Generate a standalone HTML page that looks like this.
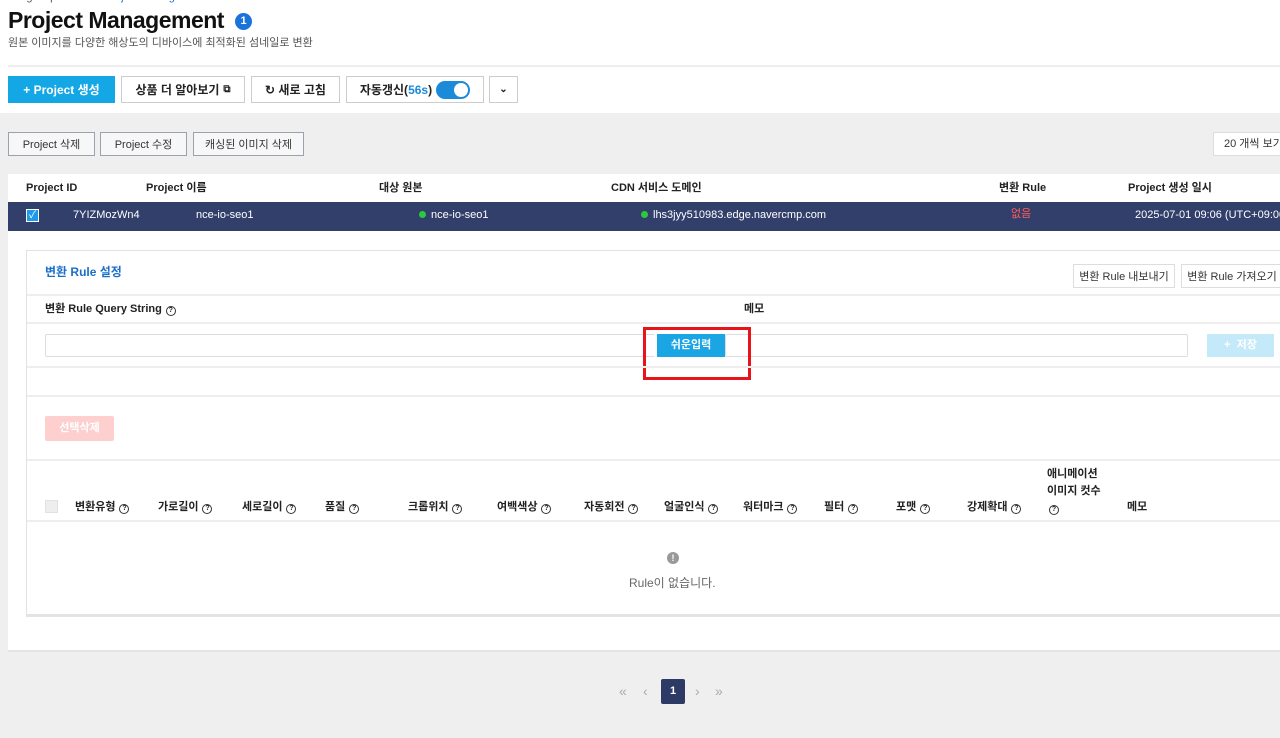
<!DOCTYPE html>
<html><head><meta charset="utf-8"><style>
*{box-sizing:border-box;margin:0;padding:0}
body{width:1280px;height:738px;overflow:hidden;background:#efefef;font-family:"Liberation Sans","Noto Sans CJK KR",sans-serif;color:#222;position:relative;font-size:12px}
.a{position:absolute;line-height:1.2}
.btn{position:absolute;background:#fff;border:1px solid #ccc;height:28px;display:flex;align-items:center;justify-content:center;font-size:12px;font-weight:bold;color:#222}
.sbtn{position:absolute;background:#f7f7f7;border:1px solid #9aa3ad;height:24px;display:flex;align-items:center;justify-content:center;font-size:11px;color:#333}
.th{position:absolute;font-size:11px;font-weight:bold;color:#222;white-space:nowrap;line-height:14px}
.q{display:inline-block;width:10px;height:10px;border:1px solid #333;border-radius:50%;font-size:7px;line-height:8px;text-align:center;margin-left:4px;vertical-align:0px;font-weight:bold}
.hl{position:absolute;height:2px;background:#eee}
</style></head><body>
<div class="a" style="left:0;top:0;width:1280px;height:113px;background:#fff"></div>
<div class="a" style="left:8px;top:-9px;font-size:11px;color:#555">Image Optimizer &nbsp;/&nbsp; <span style="color:#1a73d9">Project Management</span></div>
<div class="a" style="left:8px;top:7px;font-size:23px;font-weight:bold;color:#111;letter-spacing:-0.5px">Project Management</div>
<div class="a" style="left:235px;top:13px;width:17px;height:17px;border-radius:50%;background:#1a73d9;color:#fff;font-size:11px;font-weight:bold;text-align:center;line-height:17px">1</div>
<div class="a" style="left:8px;top:37px;font-size:11px;color:#555">원본 이미지를 다양한 해상도의 디바이스에 최적화된 섬네일로 변환</div>
<div class="a" style="left:8px;top:65px;width:1272px;height:2px;background:#eee"></div>
<div class="btn" style="left:8px;top:76px;width:107px;height:27px;background:#14a7e6;border-color:#14a7e6;color:#fff">+ Project 생성</div>
<div class="btn" style="left:121px;top:76px;width:124px;height:27px">상품 더 알아보기 <span style="font-size:10px;margin-left:4px">⧉</span></div>
<div class="btn" style="left:251px;top:76px;width:89px;height:27px">↻ 새로 고침</div>
<div class="btn" style="left:346px;top:76px;width:138px;height:27px">자동갱신(<span style="color:#1a8ad9">56s</span>)<span style="display:inline-block;width:34px;height:18px;border-radius:9px;background:#1a8ad9;margin-left:4px;position:relative"><span style="position:absolute;right:2px;top:2px;width:14px;height:14px;border-radius:50%;background:#fff"></span></span></div>
<div class="btn" style="left:489px;top:76px;width:29px;height:27px;font-size:10px">⌄</div>

<div class="sbtn" style="left:8px;top:132px;width:87px">Project 삭제</div>
<div class="sbtn" style="left:100px;top:132px;width:87px">Project 수정</div>
<div class="sbtn" style="left:193px;top:132px;width:111px">캐싱된 이미지 삭제</div>
<div class="a" style="left:1213px;top:132px;width:70px;height:24px;background:#fff;border:1px solid #ddd;font-size:11px;line-height:22px;padding-left:10px;color:#333;white-space:nowrap">20 개씩 보기</div>

<div class="a" style="left:8px;top:174px;width:1272px;height:476px;background:#fff;box-shadow:0 2px 0 #e4e4e4"></div>
<div class="th" style="left:26px;top:181px">Project ID</div>
<div class="th" style="left:146px;top:181px">Project 이름</div>
<div class="th" style="left:379px;top:181px">대상 원본</div>
<div class="th" style="left:611px;top:181px">CDN 서비스 도메인</div>
<div class="th" style="left:999px;top:181px">변환 Rule</div>
<div class="th" style="left:1128px;top:181px">Project 생성 일시</div>
<div class="a" style="left:8px;top:202px;width:1272px;height:29px;background:#323f6b"></div>
<div class="a" style="left:26px;top:209px;width:13px;height:13px;background:#1e9be8;border:1px solid #fff;color:#fff;font-size:10px;line-height:11px;text-align:center">✓</div>
<div class="a" style="left:73px;top:209px;color:#fff;font-size:11px">7YIZMozWn4</div>
<div class="a" style="left:196px;top:209px;color:#fff;font-size:11px">nce-io-seo1</div>
<div class="a" style="left:419px;top:209px;color:#fff;font-size:11px"><span style="display:inline-block;width:7px;height:7px;border-radius:50%;background:#2bc840;margin-right:5px"></span>nce-io-seo1</div>
<div class="a" style="left:641px;top:209px;color:#fff;font-size:11px"><span style="display:inline-block;width:7px;height:7px;border-radius:50%;background:#2bc840;margin-right:5px"></span>lhs3jyy510983.edge.navercmp.com</div>
<div class="a" style="left:1011px;top:208px;color:#ff5a5a;font-size:11px">없음</div>
<div class="a" style="left:1135px;top:209px;color:#fff;font-size:11px;white-space:nowrap">2025-07-01 09:06 (UTC+09:00)</div>

<div class="a" style="left:26px;top:250px;width:1260px;height:365px;border:1px solid #e2e2e2;border-right:none;box-shadow:0 2px 0 #e4e4e4"></div>
<div class="a" style="left:45px;top:265px;font-size:12px;font-weight:bold;color:#1a6fc9">변환 Rule 설정</div>
<div class="sbtn" style="left:1073px;top:264px;width:102px;background:#fff;border-color:#ddd">변환 Rule 내보내기</div>
<div class="sbtn" style="left:1181px;top:264px;width:102px;background:#fff;border-color:#ddd">변환 Rule 가져오기</div>
<div class="hl" style="left:27px;top:294px;width:1253px"></div>
<div class="th" style="left:45px;top:302px">변환 Rule Query String<span class="q">?</span></div>
<div class="th" style="left:744px;top:302px">메모</div>
<div class="hl" style="left:27px;top:322px;width:1253px"></div>
<div class="a" style="left:45px;top:334px;width:610px;height:23px;border:1px solid #ddd;border-right:none;border-radius:2px"></div>
<div class="a" style="left:725px;top:334px;width:463px;height:23px;border:1px solid #ddd;border-radius:2px"></div>
<div class="a" style="left:657px;top:334px;width:68px;height:23px;background:#1aa6e4;color:#fff;font-size:11px;font-weight:bold;text-align:center;line-height:23px">쉬운입력</div>
<div class="a" style="left:643px;top:327px;width:108px;height:53px;border:3px solid #e8141a"></div>
<div class="a" style="left:1207px;top:334px;width:67px;height:23px;background:#c4e9f8;color:#fff;font-size:11px;font-weight:bold;text-align:center;line-height:23px">+ &nbsp;저장</div>
<div class="hl" style="left:27px;top:366px;width:1253px"></div>
<div class="hl" style="left:27px;top:395px;width:1253px"></div>
<div class="a" style="left:45px;top:416px;width:69px;height:25px;background:#fdd0cf;color:#fff;font-size:11px;font-weight:bold;text-align:center;line-height:25px;border-radius:2px">선택삭제</div>
<div class="hl" style="left:27px;top:459px;width:1253px"></div>
<div class="a" style="left:45px;top:500px;width:13px;height:13px;background:#eee;border:1px solid #e2e2e2"></div>
<div class="th" style="left:75px;top:500px">변환유형<span class="q">?</span></div>
<div class="th" style="left:158px;top:500px">가로길이<span class="q">?</span></div>
<div class="th" style="left:242px;top:500px">세로길이<span class="q">?</span></div>
<div class="th" style="left:325px;top:500px">품질<span class="q">?</span></div>
<div class="th" style="left:408px;top:500px">크롭위치<span class="q">?</span></div>
<div class="th" style="left:497px;top:500px">여백색상<span class="q">?</span></div>
<div class="th" style="left:584px;top:500px">자동회전<span class="q">?</span></div>
<div class="th" style="left:664px;top:500px">얼굴인식<span class="q">?</span></div>
<div class="th" style="left:743px;top:500px">워터마크<span class="q">?</span></div>
<div class="th" style="left:824px;top:500px">필터<span class="q">?</span></div>
<div class="th" style="left:896px;top:500px">포맷<span class="q">?</span></div>
<div class="th" style="left:967px;top:500px">강제확대<span class="q">?</span></div>
<div class="th" style="left:1047px;top:466px;line-height:17px">애니메이션<br>이미지 컷수<br><span class="q" style="margin-left:2px">?</span></div>
<div class="th" style="left:1127px;top:500px">메모</div>
<div class="hl" style="left:27px;top:520px;width:1253px"></div>
<div class="a" style="left:667px;top:552px;width:12px;height:12px;border-radius:50%;background:#999;color:#fff;font-size:9px;font-weight:bold;text-align:center;line-height:12px">!</div>
<div class="a" style="left:629px;top:576px;font-size:12px;color:#666">Rule이 없습니다.</div>

<div class="a" style="left:619px;top:683px;color:#aaa;font-size:14px">«</div>
<div class="a" style="left:643px;top:683px;color:#aaa;font-size:14px">‹</div>
<div class="a" style="left:661px;top:679px;width:24px;height:25px;background:#2d3a66;color:#fff;font-size:11px;font-weight:bold;text-align:center;line-height:25px;border-radius:2px">1</div>
<div class="a" style="left:695px;top:683px;color:#aaa;font-size:14px">›</div>
<div class="a" style="left:715px;top:683px;color:#aaa;font-size:14px">»</div>
</body></html>
